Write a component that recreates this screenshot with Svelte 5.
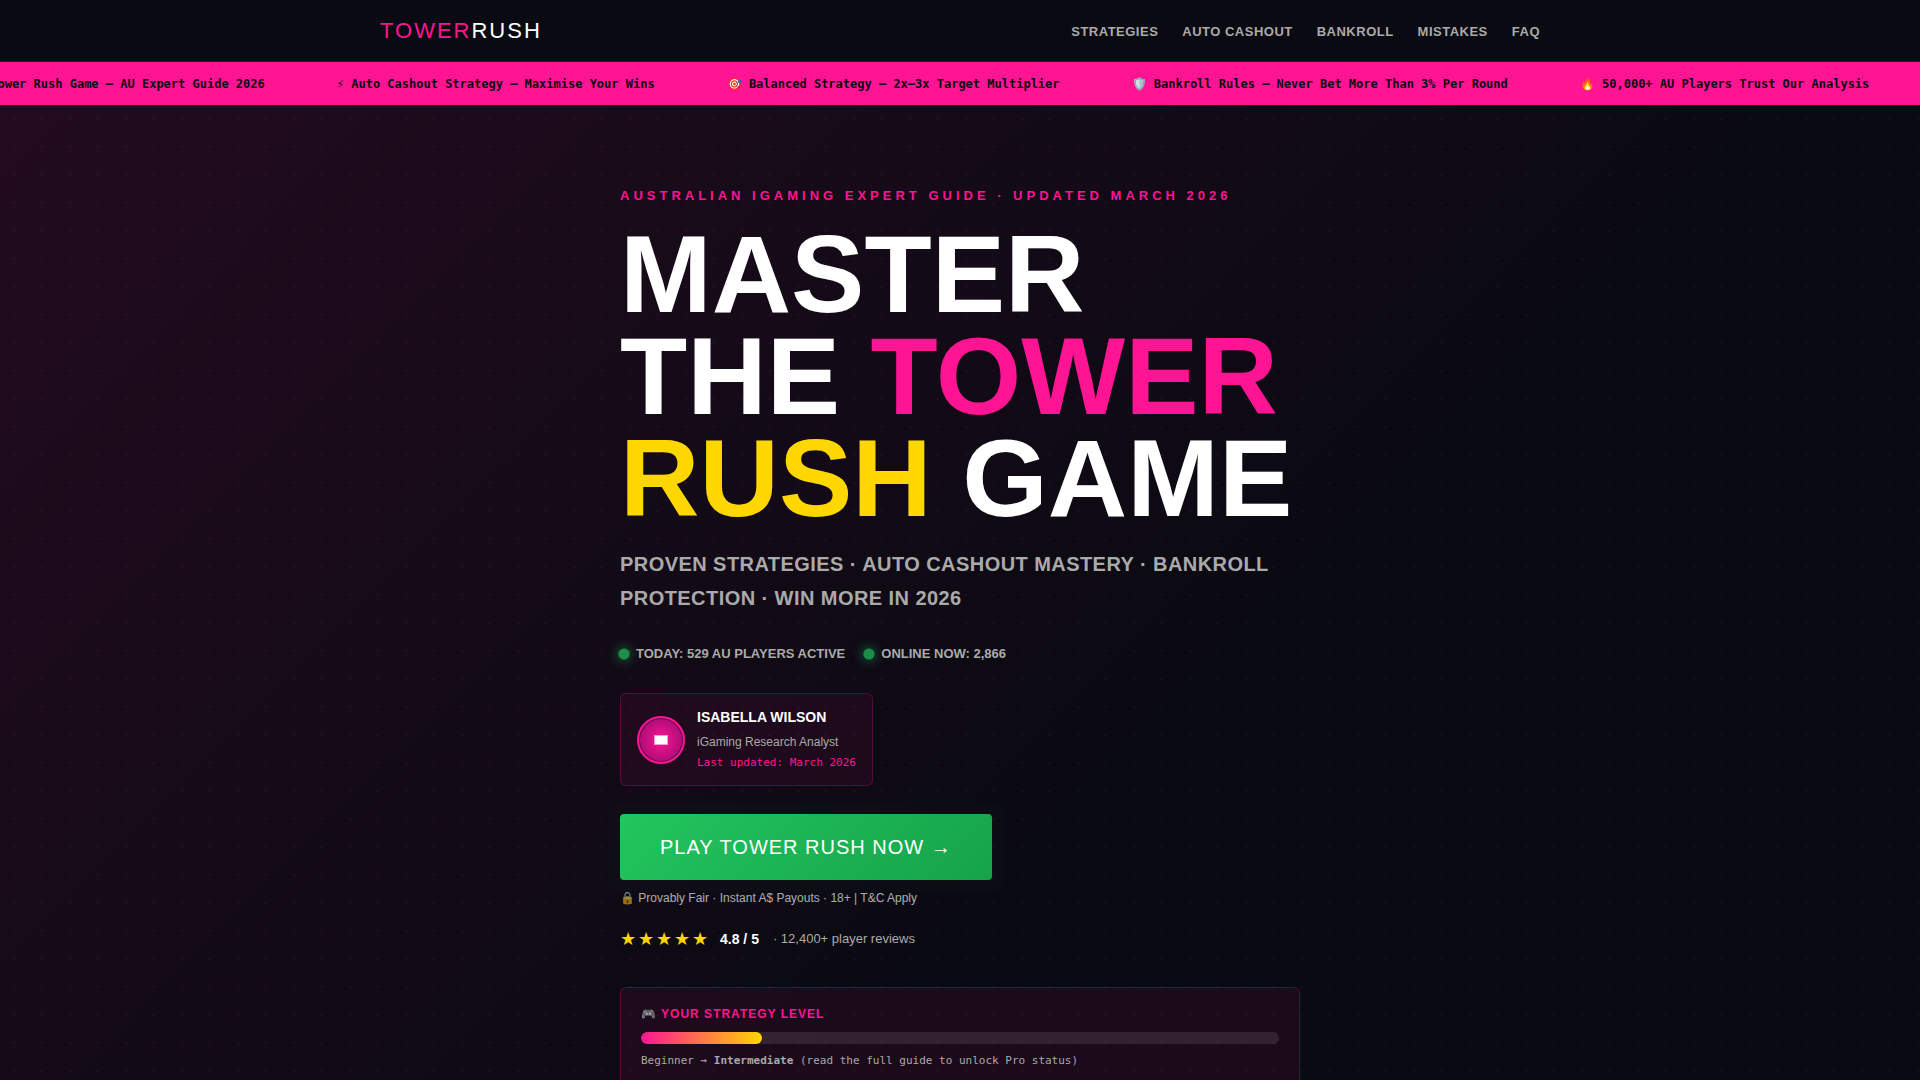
<script lang="ts">
	const links = [
		{ label: 'Strategies', href: '#strategies' },
		{ label: 'Auto Cashout', href: '#auto-cashout' },
		{ label: 'Bankroll', href: '#bankroll' },
		{ label: 'Mistakes', href: '#mistakes' },
		{ label: 'FAQ', href: '#faq' }
	];

	const ticker = [
		'🏆 Tower Rush Game — AU Expert Guide 2026',
		'⚡ Auto Cashout Strategy — Maximise Your Wins',
		'🎯 Balanced Strategy — 2x–3x Target Multiplier',
		'🛡️ Bankroll Rules — Never Bet More Than 3% Per Round',
		'🔥 50,000+ AU Players Trust Our Analysis'
	];

	let today = $state(529);
	let online = $state(2866);
	let level = $state(19);
</script>

<header>
	<div class="nav-inner">
		<a class="logo" href="#top"><span>TOWER</span>RUSH</a>
		<nav>
			{#each links as link}
				<a href={link.href}>{link.label}</a>
			{/each}
		</nav>
	</div>
</header>

<div class="ticker">
	<div class="ticker-track">
		{#each ticker as item}
			<span>{item}</span>
		{/each}
	</div>
</div>

<section class="hero" id="top">
	<div class="hero-content">
		<p class="eyebrow">Australian iGaming Expert Guide · Updated March 2026</p>
		<h1>Master<br />the <span class="pink">Tower</span> <span class="gold">Rush</span> Game</h1>
		<p class="sub">Proven Strategies · Auto Cashout Mastery · Bankroll Protection · Win More in 2026</p>

		<div class="live">
			<span class="live-item"><i class="dot"></i>Today: {today} AU players active</span>
			<span class="live-item"><i class="dot"></i>Online now: {online.toLocaleString('en-AU')}</span>
		</div>

		<div class="author">
			<div class="avatar">
				<svg width="14" height="10" viewBox="0 0 14 10" aria-hidden="true">
					<rect width="14" height="10" fill="#fff" opacity="0.6" />
					<rect x="1" y="1" width="12" height="8" fill="#fff" />
				</svg>
			</div>
			<div>
				<div class="author-name">Isabella Wilson</div>
				<div class="author-role">iGaming Research Analyst</div>
				<div class="author-date">Last updated: March 2026</div>
			</div>
		</div>

		<a class="cta" href="#play">Play Tower Rush Now →</a>
		<p class="trust">🔒 Provably Fair · Instant A$ Payouts · 18+ | T&amp;C Apply</p>

		<div class="rating">
			<span class="stars">★★★★★</span>
			<strong>4.8 / 5</strong>
			<span class="reviews">· 12,400+ player reviews</span>
		</div>

		<div class="level">
			<div class="level-label">🎮 Your Strategy Level</div>
			<div class="bar"><div class="bar-fill" style="width: {level}%"></div></div>
			<p>Beginner → <strong>Intermediate</strong> (read the full guide to unlock Pro status)</p>
		</div>
	</div>
</section>

<style>
	:global(body) {
		background: #0a0a12;
		color: #fff;
		font-family: 'Liberation Sans', Arial, sans-serif;
		line-height: 1.7;
		overflow-x: hidden;
	}

	p,
	h1 {
		margin: 0;
	}

	a {
		color: inherit;
		text-decoration: none;
	}

	header {
		background: #0a0a12;
		border-bottom: 1px solid rgba(255, 20, 147, 0.2);
	}

	.nav-inner {
		display: flex;
		align-items: center;
		justify-content: space-between;
		max-width: 1160px;
		margin: 0 auto;
		padding: 12px 20px;
	}

	.logo {
		font-size: 22px;
		line-height: 37px;
		letter-spacing: 2px;
	}

	.logo span,
	.pink {
		color: #ff1493;
	}

	nav {
		display: flex;
		gap: 24px;
		padding-top: 4px;
		color: #aaa;
		font-size: 13px;
		font-weight: 700;
		letter-spacing: 0.038em;
		text-transform: uppercase;
	}

	.ticker {
		background: #ff1493;
		color: #0a0a12;
		overflow: hidden;
		padding: 12px 0 10px;
	}

	.ticker-track {
		display: flex;
		gap: 72px;
		width: max-content;
		margin-left: -32px;
		font: 700 12px/21px 'DejaVu Sans Mono', monospace;
		white-space: nowrap;
	}

	.hero {
		padding: 80px 20px;
		background:
			radial-gradient(circle, rgba(255, 20, 147, 0.1) 1px, transparent 1px) 0 0 / 28px 28px,
			linear-gradient(135deg, rgba(255, 20, 147, 0.1) 0%, transparent 60%);
	}

	.hero-content {
		max-width: 680px;
		margin: 0 auto;
	}

	.eyebrow {
		margin-bottom: 16px;
		color: #ff1493;
		font-size: 13px;
		font-weight: 700;
		line-height: 22px;
		letter-spacing: 4px;
		text-transform: uppercase;
	}

	h1 {
		margin-bottom: 18px;
		font-size: 110px;
		font-weight: 700;
		line-height: 102px;
		text-transform: uppercase;
	}

	.gold {
		color: #ffd700;
	}

	.sub {
		margin-bottom: 28px;
		color: #aaa;
		font-size: 20px;
		font-weight: 700;
		line-height: 34px;
		letter-spacing: 0.022em;
		text-transform: uppercase;
	}

	.live {
		display: flex;
		flex-wrap: wrap;
		gap: 20px;
		margin-bottom: 28px;
		color: #aaa;
		font-size: 13px;
		font-weight: 700;
		line-height: 22px;
		text-transform: uppercase;
	}

	.live-item {
		display: flex;
		align-items: center;
		gap: 8px;
	}

	.dot {
		width: 8px;
		height: 8px;
		border-radius: 50%;
		background: #22c55e;
		box-shadow: 0 0 8px #22c55e;
		opacity: 0.7;
		transform: scale(1.4);
	}

	.author {
		display: flex;
		align-items: center;
		gap: 12px;
		width: fit-content;
		margin-bottom: 28px;
		padding: 14px 16px;
		border: 1px solid rgba(255, 20, 147, 0.25);
		border-radius: 6px;
		background: rgba(255, 20, 147, 0.07);
	}

	.avatar {
		display: flex;
		align-items: center;
		justify-content: center;
		box-sizing: border-box;
		width: 48px;
		height: 48px;
		border: 2px solid #ff1493;
		border-radius: 50%;
		background: radial-gradient(circle, #ff1493, #8b0a6b);
		box-shadow: inset 0 0 0 1px #5c0a4a;
	}

	.author-name {
		margin-bottom: 6px;
		font-size: 14px;
		font-weight: 700;
		line-height: 18px;
		text-transform: uppercase;
	}

	.author-role {
		margin-bottom: 2px;
		color: #aaa;
		font-size: 12px;
		line-height: 20px;
	}

	.author-date {
		color: #ff1493;
		font: 11px/17px 'DejaVu Sans Mono', monospace;
	}

	.cta {
		display: block;
		width: fit-content;
		padding: 16px 40px;
		border-radius: 4px;
		background: linear-gradient(135deg, #22c55e, #16a34a);
		box-shadow: 0 0 0 12px rgba(34, 197, 94, 0.02);
		font-size: 20px;
		line-height: 34px;
		letter-spacing: 1px;
		text-transform: uppercase;
	}

	.trust {
		margin: 8px 0 16px;
		color: #fff;
		font-size: 12px;
		line-height: 20px;
		opacity: 0.65;
	}

	.rating {
		display: flex;
		align-items: center;
		gap: 10px;
		margin-bottom: 32px;
		font-size: 14px;
	}

	.stars {
		color: #ffd700;
		font-size: 18px;
		line-height: 31px;
		letter-spacing: 2px;
	}

	.reviews {
		padding-left: 4px;
		color: #aaa;
		font-size: 13px;
	}

	.level {
		padding: 16px 20px;
		border: 1px solid rgba(255, 20, 147, 0.25);
		border-radius: 6px;
		background: rgba(255, 20, 147, 0.07);
	}

	.level-label {
		margin-bottom: 8px;
		color: #ff1493;
		font-size: 12px;
		font-weight: 700;
		line-height: 20px;
		letter-spacing: 1px;
		text-transform: uppercase;
	}

	.bar {
		height: 12px;
		overflow: hidden;
		border-radius: 6px;
		background: rgba(255, 255, 255, 0.1);
	}

	.bar-fill {
		height: 100%;
		border-radius: 6px;
		background: linear-gradient(90deg, #ff1493, #ffd700);
	}

	.level p {
		margin-top: 8px;
		color: #aaa;
		font: 11px/17px 'DejaVu Sans Mono', monospace;
	}

	@media (max-width: 800px) {
		nav {
			display: none;
		}

		h1 {
			font-size: 56px;
			line-height: 52px;
		}
	}
</style>
